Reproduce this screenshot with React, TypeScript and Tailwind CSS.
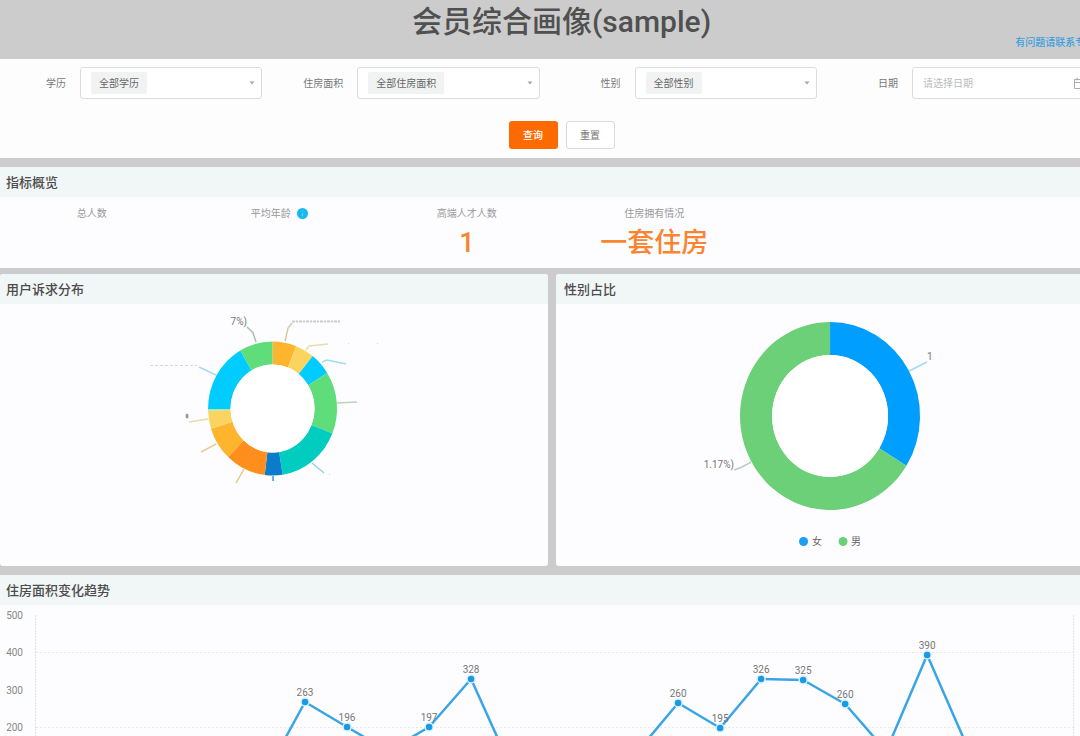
import React from 'react';

const FONT = "font-['Roboto','Noto_Sans_CJK_SC',sans-serif]";

type Slice = { from: number; to: number; color: string };

function ringPath(cx: number, cy: number, outer: [number, number], inner: [number, number], from: number, to: number) {
  const at = (deg: number, [rx, ry]: [number, number]) => {
    const a = (deg * Math.PI) / 180;
    return `${cx + rx * Math.sin(a)} ${cy - ry * Math.cos(a)}`;
  };
  const large = to - from > 180 ? 1 : 0;
  return (
    `M${at(from, outer)} A${outer[0]} ${outer[1]} 0 ${large} 1 ${at(to, outer)} ` +
    `L${at(to, inner)} A${inner[0]} ${inner[1]} 0 ${large} 0 ${at(from, inner)} Z`
  );
}

function Ring(props: { cx: number; cy: number; outer: [number, number]; inner: [number, number]; slices: Slice[] }) {
  return (
    <g>
      {props.slices.map((s) => (
        <path key={s.from} d={ringPath(props.cx, props.cy, props.outer, props.inner, s.from, s.to)} fill={s.color} />
      ))}
    </g>
  );
}

const appealSlices: Slice[] = [
  { from: 0, to: 21.5, color: '#ffb42e' },
  { from: 21.5, to: 38.5, color: '#f9d55f' },
  { from: 38.5, to: 58, color: '#00ccff' },
  { from: 58, to: 112, color: '#5edd7a' },
  { from: 112, to: 171, color: '#00ccc0' },
  { from: 171, to: 187, color: '#0a7ccb' },
  { from: 187, to: 223.5, color: '#ff8e1c' },
  { from: 223.5, to: 252.5, color: '#ffb42e' },
  { from: 252.5, to: 268, color: '#f9d55f' },
  { from: 268, to: 269.5, color: '#a5e8b0' },
  { from: 269.5, to: 330, color: '#00ccff' },
  { from: 330, to: 360, color: '#5edd7a' },
];

const appealLeaders = [
  { points: '256,38 253,29 247,23', color: '#a3c4ac' },
  { points: '285,37 288,24 292,19', color: '#dccb9c' },
  { points: '306,46 309,42 328,40', color: '#e6dcae' },
  { points: '322,58 327,56 346,60', color: '#a3dcec' },
  { points: '337,99 357,98', color: '#b4d6bc' },
  { points: '312,159 324,169', color: '#96d2e4' },
  { points: '273,172 273,177', color: '#3c93cc' },
  { points: '244,165 236,179', color: '#e5c88c' },
  { points: '216,140 201,148', color: '#e5cf96' },
  { points: '208,115 189,118', color: '#e6dcae' },
  { points: '216,71 199,63', color: '#a3dcec' },
];

const genderSlices: Slice[] = [
  { from: 0, to: 122, color: '#009fff' },
  { from: 122, to: 360, color: '#6bd077' },
];

const trend: { x: number; y: number; label?: string }[] = [
  { x: 264, y: 172 },
  { x: 305, y: 97, label: '263' },
  { x: 347, y: 122, label: '196' },
  { x: 388, y: 146 },
  { x: 429, y: 122, label: '197' },
  { x: 471, y: 74, label: '328' },
  { x: 512, y: 165 },
  { x: 554, y: 168 },
  { x: 595, y: 170 },
  { x: 637, y: 147 },
  { x: 678, y: 98, label: '260' },
  { x: 720, y: 123, label: '195' },
  { x: 761, y: 74, label: '326' },
  { x: 803, y: 75, label: '325' },
  { x: 845, y: 99, label: '260' },
  { x: 886, y: 146 },
  { x: 927, y: 50, label: '390' },
  { x: 969, y: 146 },
];

const ticks = [
  { value: '500', y: 10 },
  { value: '400', y: 47 },
  { value: '300', y: 85 },
  { value: '200', y: 122 },
];

function SelectField({ id, label, value }: { id: string; label: string; value: string }) {
  return (
    <div className="flex items-center gap-[14px] pr-[15px]">
      <label htmlFor={id} className="w-[66px] shrink-0 text-right text-[10px] text-[#777]">
        {label}
      </label>
      <div className="flex h-8 min-w-0 flex-1 items-center rounded-[3px] border border-[#dadddd] bg-white pr-1.5 pl-2.5">
        <select
          id={id}
          className="h-[22px] appearance-none rounded-[2px] bg-[#f1f3f3] px-2 text-[10px] text-[#666] field-sizing-content"
        >
          <option>{value}</option>
        </select>
        <svg className="pointer-events-none ml-auto" width="6" height="4" viewBox="0 0 6 4" aria-hidden="true">
          <path d="M0.5 0.5h5L3 3.5z" fill="#a5a8a8" />
        </svg>
      </div>
    </div>
  );
}

function PanelTitle({ children }: { children: React.ReactNode }) {
  return (
    <h2 className="flex h-[30px] items-center bg-[#f1f6f6] px-1.5 pt-0.5 text-[13px] font-medium text-[#4c4c4c]">
      {children}
    </h2>
  );
}

function Metric({ label, value, info }: { label: string; value?: string; info?: boolean }) {
  return (
    <div className="flex flex-col items-center pt-2">
      <div className="flex h-4 items-center gap-1.5 text-[10px] text-[#999]">
        <span>{label}</span>
        {info && (
          <svg width="11" height="11" viewBox="0 0 11 11" aria-hidden="true">
            <circle cx="5.5" cy="5.5" r="5.5" fill="#15baf0" />
            <path d="M5.5 5v3.2M5.5 2.7v1.1" stroke="#5fd2f7" strokeWidth="1" />
          </svg>
        )}
      </div>
      <div className="mt-1 h-9 text-[27px] leading-9 font-medium text-[#fa8430]">{value}</div>
    </div>
  );
}

export default function App() {
  return (
    <div className={`h-screen overflow-hidden bg-[#cccccc] ${FONT}`}>
      <div className="w-[104%]">
        <header className="relative h-[59px] pt-0.5 text-center">
          <h1 className="text-[30px] leading-10 font-medium text-[#505050]">会员综合画像(sample)</h1>
          <a href="#contact" className="absolute right-[28px] bottom-2 text-[10px] leading-4 font-medium text-[#3b9fe0]">
            有问题请联系专家
          </a>
        </header>

        <form className="h-[99px] bg-[#fdfdfd] pt-2" onSubmit={(e) => e.preventDefault()}>
          <div className="grid grid-cols-4 pr-[14px]">
            <SelectField id="education" label="学历" value="全部学历" />
            <SelectField id="area" label="住房面积" value="全部住房面积" />
            <SelectField id="gender" label="性别" value="全部性别" />
            <div className="flex items-center gap-[14px] pr-[15px]">
              <label htmlFor="date" className="w-[66px] shrink-0 text-right text-[10px] text-[#777]">
                日期
              </label>
              <div className="flex h-8 min-w-0 flex-1 items-center rounded-[3px] border border-[#dadddd] bg-white pr-2 pl-2.5">
                <input
                  id="date"
                  type="text"
                  placeholder="请选择日期"
                  className="h-6 min-w-0 flex-1 bg-transparent text-[10px] text-[#666] outline-none placeholder:text-[#b9bcbc]"
                />
                <svg width="11" height="12" viewBox="0 0 11 12" fill="none" stroke="#a9adad" aria-hidden="true">
                  <path d="M0.5 2.5h10v9h-10zM0.5 5.5h10M3 0.5v3M8 0.5v3" />
                </svg>
              </div>
            </div>
          </div>
          <div className="mt-[22px] flex justify-center gap-2">
            <button type="submit" className="h-7 w-[49px] rounded-[3px] bg-[#ff6a00] text-[10px] font-medium text-white">
              查询
            </button>
            <button type="reset" className="h-7 w-[49px] rounded-[3px] border border-[#d8dbdb] bg-white text-[10px] text-[#777]">
              重置
            </button>
          </div>
        </form>

        <section className="mt-[9px] h-[101px] bg-[#fdfdff]">
          <PanelTitle>指标概览</PanelTitle>
          <div className="-ml-0.5 grid grid-cols-6">
            <Metric label="总人数" />
            <Metric label="平均年龄" info />
            <Metric label="高端人才人数" value="1" />
            <Metric label="住房拥有情况" value="一套住房" />
          </div>
        </section>

        <div className="mt-1.5 grid grid-cols-2 gap-2 pr-[19px]">
          <section className="overflow-hidden rounded-[3px] bg-[#fdfdff]">
            <PanelTitle>用户诉求分布</PanelTitle>
            <svg className="block h-[262px] w-full" viewBox="0 0 548 262">
              <Ring cx={272.5} cy={104.5} outer={[64.5, 67]} inner={[42, 44]} slices={appealSlices} />
              <ellipse cx="272.5" cy="104.5" rx="42" ry="44" fill="#fff" />
              {appealLeaders.map((l) => (
                <polyline key={l.points} points={l.points} fill="none" stroke={l.color} strokeWidth="1.5" />
              ))}
              <path d="M292 17.5h49" stroke="#b5b5b5" strokeWidth="2" strokeDasharray="3 1 2 1" opacity="0.7" />
              <path d="M150 61.5h47" stroke="#d2d8da" strokeDasharray="3 2" />
              <path d="M348 39.5h1M377 39.5h1M329 170.5h1" stroke="#d5d5d5" />
              <ellipse cx="187" cy="112" rx="1.5" ry="2.5" fill="#999" />
              <text x="247" y="21" textAnchor="end" fontSize="10" fill="#777">
                7%)
              </text>
            </svg>
          </section>
          <section className="overflow-hidden rounded-[3px] bg-[#fdfdff]">
            <PanelTitle>
              <span className="pl-0.5">性别占比</span>
            </PanelTitle>
            <svg className="block h-[262px] w-full" viewBox="0 0 548 262">
              <Ring cx={274} cy={112} outer={[90, 94]} inner={[58, 61]} slices={genderSlices} />
              <ellipse cx="274" cy="112" rx="58" ry="61" fill="#fff" />
              <polyline points="353,67 371,58" fill="none" stroke="#a5d8f5" strokeWidth="1.5" />
              <polyline points="195,158 186,163 178,166" fill="none" stroke="#bccdbf" strokeWidth="1.5" />
              <text x="371" y="56" fontSize="10" fill="#777">
                1
              </text>
              <text x="178" y="164" textAnchor="end" fontSize="10" fill="#777">
                1.17%)
              </text>
              <circle cx="247.5" cy="237.5" r="4.5" fill="#1a9ff5" />
              <text x="256" y="241" fontSize="10" fill="#666">
                女
              </text>
              <circle cx="287" cy="237.5" r="4.5" fill="#6bd077" />
              <text x="295" y="241" fontSize="10" fill="#666">
                男
              </text>
            </svg>
          </section>
        </div>

        <section className="mt-[9px] bg-[#fdfdff]">
          <PanelTitle>住房面积变化趋势</PanelTitle>
          <svg className="block w-full" viewBox="0 0 1123 200">
            <path d="M35.5 10v190M1073.5 10v190" stroke="#dbe3e3" strokeDasharray="2 1" />
            {ticks.map((t) => (
              <g key={t.value}>
                <path
                  d={`M36 ${t.y + 0.5}H1073`}
                  stroke={t.value === '500' || t.value === '300' ? '#f9fafa' : '#e4e8e8'}
                  strokeDasharray="2 2"
                />
                <text x="23" y={t.y + 4} textAnchor="end" fontSize="10" fill="#888">
                  {t.value}
                </text>
              </g>
            ))}
            <polyline
              points={trend.map((p) => `${p.x},${p.y}`).join(' ')}
              fill="none"
              stroke="#39a5e6"
              strokeWidth="2.5"
              strokeLinejoin="round"
            />
            {trend.map((p) => (
              <g key={p.x}>
                <circle cx={p.x} cy={p.y} r="4" fill="#1b9ae4" stroke="#d9f0fc" strokeWidth="1.5" />
                {p.label && (
                  <text x={p.x} y={p.y - 6} textAnchor="middle" fontSize="10" fill="#777">
                    {p.label}
                  </text>
                )}
              </g>
            ))}
          </svg>
        </section>
      </div>
    </div>
  );
}
